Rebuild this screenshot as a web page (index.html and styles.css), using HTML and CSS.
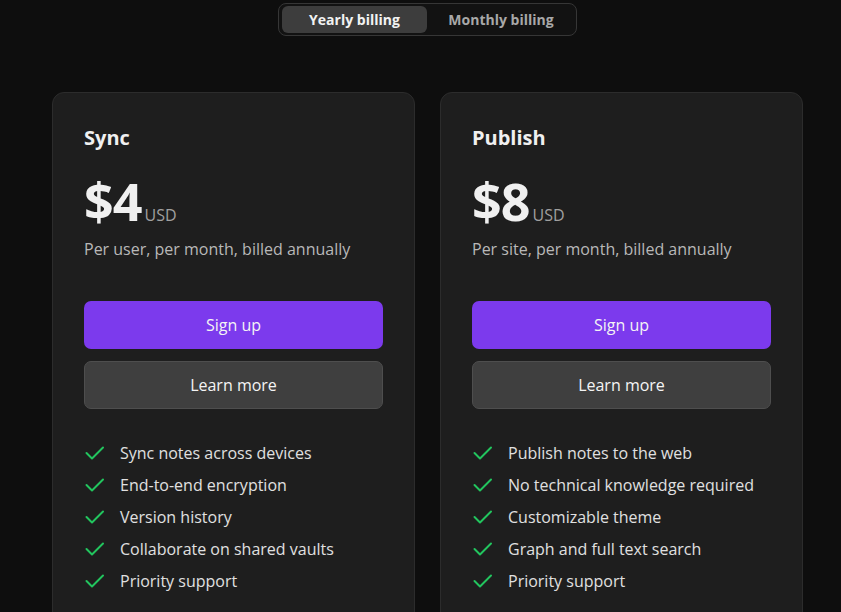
FILE: index.html
```html
<!DOCTYPE html>
<html>
<head>
<meta charset="utf-8">
<link rel="stylesheet" href="styles.css">
</head>
<body>
<div class="page">
  <div class="toggle-row">
    <div class="toggle">
      <span class="seg active">Yearly billing</span>
      <span class="seg">Monthly billing</span>
    </div>
  </div>
  <div class="cards">
    <div class="card">
      <h2 class="title">Sync</h2>
      <div class="price"><span class="amount">$4</span><span class="cur">USD</span></div>
      <p class="desc">Per user, per month, billed annually</p>
      <div class="buttons">
        <a class="btn primary">Sign up</a>
        <a class="btn secondary">Learn more</a>
      </div>
      <ul class="features">
        <li><svg class="check" viewBox="0 0 20 20"><path d="M1.5 10l5.5 5.5L18 4.5"/></svg>Sync notes across devices</li>
        <li><svg class="check" viewBox="0 0 20 20"><path d="M1.5 10l5.5 5.5L18 4.5"/></svg>End-to-end encryption</li>
        <li><svg class="check" viewBox="0 0 20 20"><path d="M1.5 10l5.5 5.5L18 4.5"/></svg>Version history</li>
        <li><svg class="check" viewBox="0 0 20 20"><path d="M1.5 10l5.5 5.5L18 4.5"/></svg>Collaborate on shared vaults</li>
        <li><svg class="check" viewBox="0 0 20 20"><path d="M1.5 10l5.5 5.5L18 4.5"/></svg>Priority support</li>
      </ul>
    </div>
    <div class="card">
      <h2 class="title">Publish</h2>
      <div class="price"><span class="amount">$8</span><span class="cur">USD</span></div>
      <p class="desc">Per site, per month, billed annually</p>
      <div class="buttons">
        <a class="btn primary">Sign up</a>
        <a class="btn secondary">Learn more</a>
      </div>
      <ul class="features">
        <li><svg class="check" viewBox="0 0 20 20"><path d="M1.5 10l5.5 5.5L18 4.5"/></svg>Publish notes to the web</li>
        <li><svg class="check" viewBox="0 0 20 20"><path d="M1.5 10l5.5 5.5L18 4.5"/></svg>No technical knowledge required</li>
        <li><svg class="check" viewBox="0 0 20 20"><path d="M1.5 10l5.5 5.5L18 4.5"/></svg>Customizable theme</li>
        <li><svg class="check" viewBox="0 0 20 20"><path d="M1.5 10l5.5 5.5L18 4.5"/></svg>Graph and full text search</li>
        <li><svg class="check" viewBox="0 0 20 20"><path d="M1.5 10l5.5 5.5L18 4.5"/></svg>Priority support</li>
      </ul>
    </div>
  </div>
</div>
</body>
</html>
```

FILE: styles.css
```css
html, body {
  margin: 0;
  padding: 0;
  background: #0e0e0e;
  color: #dadada;
  font-family: "Open Sans", "Noto Sans", sans-serif;
  overflow: hidden;
  height: 612px;
}
.page {
  width: 751px;
  margin-left: 52px;
  padding-top: 3px;
}
.toggle-row {
  display: flex;
  justify-content: center;
}
.toggle {
  display: flex;
  width: 299px;
  height: 33px;
  box-sizing: border-box;
  border: 1px solid #363636;
  border-radius: 8px;
  padding: 2px 3px;
  background: #121212;
}
.seg {
  flex: 0 0 auto;
  display: flex;
  align-items: center;
  justify-content: center;
  font-weight: 700;
  font-size: 14px;
  color: #a8a8a8;
  border-radius: 6px;
}
.seg.active {
  width: 145px;
  background: #3d3d3d;
  color: #f2f2f2;
}
.seg:not(.active) {
  flex: 1 1 auto;
  padding-left: 2px;
}
.cards {
  display: flex;
  gap: 25px;
  margin-top: 56px;
}
.card {
  flex: 1 1 0;
  background: #1e1e1e;
  border: 1px solid #2c2c2c;
  border-radius: 12px;
  padding: 31px 31px 40px;
  height: 600px;
}
.title {
  margin: 0;
  font-size: 20px;
  font-weight: 700;
  color: #f0f0f0;
  line-height: 28px;
}
.price {
  display: flex;
  align-items: baseline;
  margin-top: 18px;
  height: 62px;
}
.amount {
  font-size: 52px;
  font-weight: 700;
  color: #f0f0f0;
  line-height: 62px;
  letter-spacing: -1px;
}
.cur {
  font-size: 16px;
  color: #a0a0a0;
  margin-left: 3px;
}
.desc {
  margin: 5px 0 0;
  font-size: 16px;
  line-height: 24px;
  color: #b8b8b8;
}
.buttons {
  display: flex;
  flex-direction: column;
  gap: 12px;
  margin-top: 40px;
}
.btn {
  display: flex;
  align-items: center;
  justify-content: center;
  height: 48px;
  box-sizing: border-box;
  border-radius: 7px;
  font-size: 16px;
  color: #f4f4f4;
}
.btn.primary {
  background: #7c3aed;
}
.btn.secondary {
  background: #3f3f3f;
  border: 1px solid #4e4e4e;
}
.features {
  list-style: none;
  margin: 28px 0 0;
  padding: 0;
}
.features li {
  display: flex;
  align-items: center;
  height: 32px;
  font-size: 16px;
  color: #e0e0e0;
}
.check {
  width: 20px;
  height: 20px;
  margin: 0 15px 0 1px;
  fill: none;
  stroke: #22c55e;
  stroke-width: 2;
  stroke-linecap: round;
  stroke-linejoin: round;
}
```
